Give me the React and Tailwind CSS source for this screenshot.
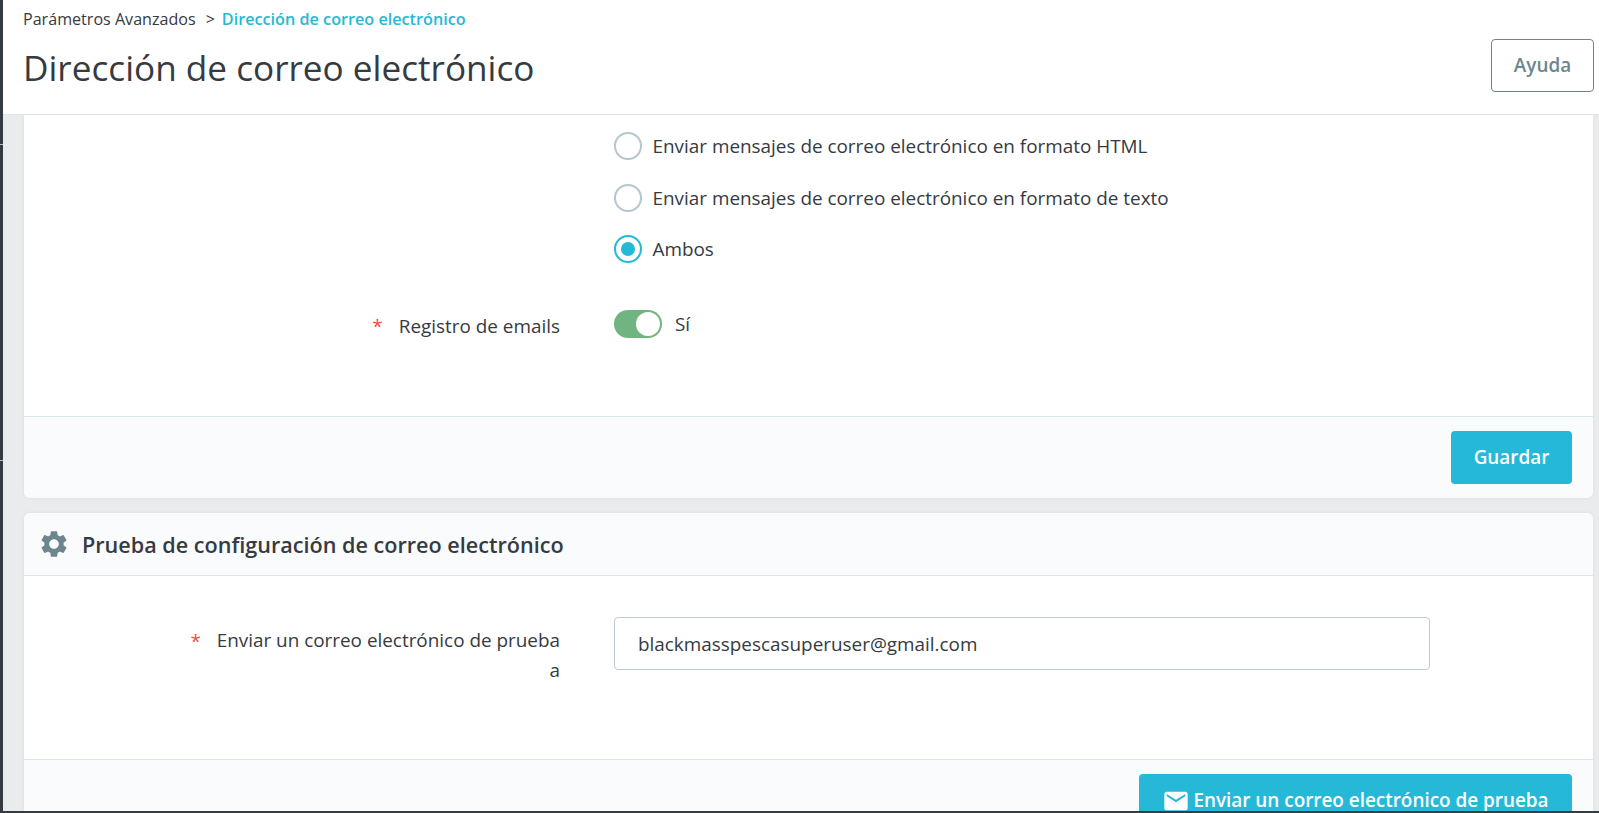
import React from "react";

const font = { fontFamily: '"Open Sans", sans-serif' };

function Radio({ checked, label }) {
  return (
    <div className="flex items-center h-[28px]">
      <span className={`w-[28px] h-[28px] rounded-full border-2 bg-white flex items-center justify-center ${checked ? "border-[#25b9d7]" : "border-[#b3c7cd]"}`}>
        {checked && <span className="w-[14px] h-[14px] rounded-full bg-[#25b9d7]" />}
      </span>
      <span className="ml-[10.5px] text-[18.9px] leading-[28px] text-[#363a41]">{label}</span>
    </div>
  );
}

export default function App() {
  return (
    <div style={font} className="relative w-[1599px] h-[813px] overflow-hidden flex flex-col bg-[#eaebec]">
      <div className="flex flex-1 min-h-0">
        <div className="relative w-[3px] bg-[#363a41] shrink-0">
          <div className="absolute left-0 top-[144px] w-[3px] h-px bg-[#bbbcbe]" />
          <div className="absolute left-0 top-[460px] w-[3px] h-px bg-[#bbbcbe]" />
        </div>
        <div className="flex-1 min-w-0 flex flex-col">
          <header className="h-[115px] shrink-0 bg-white border-b border-[#dfe1e3] flex flex-col relative">
            <div className="pl-[20px] pt-[8px] text-[16.1px] leading-[22px] text-[#363a41] flex">
              <span>Parámetros Avanzados</span>
              <span className="ml-[10px]">&gt;</span>
              <span className="ml-[7px] text-[#25b9d7] font-semibold text-[16.2px]">Dirección de correo electrónico</span>
            </div>
            <div className="flex items-start justify-between pl-[20px] pr-[5px] pt-[13px]">
              <h1 className="text-[35.15px] leading-[48px] text-[#363a41] font-normal">Dirección de correo electrónico</h1>
              <button className="w-[103px] h-[53px] -mt-[4px] border border-[#6c868e] rounded-[4px] bg-white text-[#6c868e] text-[18.9px] font-semibold">Ayuda</button>
            </div>
          </header>

          <main className="flex-1 min-h-0 pl-[21px] pr-[6px] flex flex-col gap-[15px]">
            <section className="h-[383px] shrink-0 bg-white rounded-b-[6px] shadow-[0_0_4px_rgba(0,0,0,0.06)] flex flex-col">
              <div className="flex-1 flex">
                <div className="w-[536px] shrink-0 flex flex-col pt-[198px]">
                  <div className="flex justify-end text-[18.9px] leading-[26px] text-[#363a41]">
                    <span className="text-[#f54c3e] mr-[16px]">*</span>
                    <span>Registro de emails</span>
                  </div>
                </div>
                <div className="ml-[54px] pt-[17px] flex flex-col">
                  <div className="flex flex-col gap-[23.5px]">
                    <Radio label="Enviar mensajes de correo electrónico en formato HTML" />
                    <Radio label="Enviar mensajes de correo electrónico en formato de texto" />
                    <Radio checked label="Ambos" />
                  </div>
                  <div className="flex items-center mt-[47px]">
                    <span className="relative w-[48px] h-[28px] rounded-full bg-[#70b580]">
                      <span className="absolute right-[2px] top-[2px] w-[24px] h-[24px] rounded-full bg-white" />
                    </span>
                    <span className="ml-[13px] text-[18.9px] leading-[24px] text-[#363a41]">Sí</span>
                  </div>
                </div>
              </div>
              <div className="h-[82px] shrink-0 bg-[#fafbfc] border-t border-[#dbe6e9] rounded-b-[6px] flex justify-end items-start pt-[14px] pr-[21px]">
                <button className="w-[121px] h-[53px] rounded-[4px] bg-[#25b9d7] text-white text-[18.9px] font-semibold">Guardar</button>
              </div>
            </section>

            <section className="flex-1 min-h-0 bg-white rounded-t-[6px] shadow-[0_0_4px_rgba(0,0,0,0.06)] flex flex-col overflow-hidden">
              <div className="h-[63px] shrink-0 bg-[#fafbfc] border-b border-[#dbe6e9] flex items-center pl-[14px]">
                <svg width="32" height="32" viewBox="0 0 24 24" fill="#6c868e">
                  <path d="M19.14 12.94c.04-.3.06-.61.06-.94 0-.32-.02-.64-.07-.94l2.03-1.58a.49.49 0 0 0 .12-.61l-1.92-3.32a.488.488 0 0 0-.59-.22l-2.39.96c-.5-.38-1.03-.7-1.62-.94l-.36-2.54a.484.484 0 0 0-.48-.41h-3.84c-.24 0-.43.17-.47.41l-.36 2.54c-.59.24-1.13.57-1.62.94l-2.39-.96c-.22-.08-.47 0-.59.22L2.74 8.87c-.12.21-.08.47.12.61l2.03 1.58c-.05.3-.09.63-.09.94s.02.64.07.94l-2.03 1.58a.49.49 0 0 0-.12.61l1.92 3.32c.12.22.37.29.59.22l2.39-.96c.5.38 1.03.7 1.62.94l.36 2.54c.05.24.24.41.48.41h3.84c.24 0 .44-.17.47-.41l.36-2.54c.59-.24 1.13-.56 1.62-.94l2.39.96c.22.08.47 0 .59-.22l1.92-3.32c.12-.22.07-.47-.12-.61l-2.01-1.58zM12 15.6c-1.98 0-3.6-1.62-3.6-3.6s1.62-3.6 3.6-3.6 3.6 1.62 3.6 3.6-1.62 3.6-3.6 3.6z" />
                </svg>
                <h2 className="ml-[12px] pt-[1px] text-[21.6px] leading-[30px] font-semibold text-[#363a41]">Prueba de configuración de correo electrónico</h2>
              </div>
              <div className="h-[183px] shrink-0 flex pt-[41px]">
                <div className="w-[536px] shrink-0 flex justify-end pt-[9px]">
                  <span className="text-[#f54c3e] text-[18.9px] leading-[30px] mr-[13px]">*</span>
                  <span className="w-[346px] text-[18.9px] leading-[29.5px] text-right text-[#363a41]">Enviar un correo electrónico de prueba a</span>
                </div>
                <div className="ml-[54px]">
                  <input readOnly value="blackmasspescasuperuser@gmail.com" className="w-[816px] h-[53px] px-[23px] border border-[#bbcdd2] rounded-[4px] bg-white text-[18.9px] text-[#363a41] outline-none" />
                </div>
              </div>
              <div className="flex-1 bg-[#fafbfc] border-t border-[#dbe6e9] flex justify-end items-start pt-[14px] pr-[21px]">
                <button className="w-[433px] h-[53px] shrink-0 rounded-[4px] bg-[#25b9d7] text-white text-[18.9px] font-semibold flex items-center justify-center">
                  <svg width="28" height="28" viewBox="0 0 24 24" fill="#fff" className="mr-[3px]">
                    <path d="M20 4H4c-1.1 0-1.99.9-1.99 2L2 18c0 1.1.9 2 2 2h16c1.1 0 2-.9 2-2V6c0-1.1-.9-2-2-2zm0 4-8 5-8-5V6l8 5 8-5v2z" />
                  </svg>
                  Enviar un correo electrónico de prueba
                </button>
              </div>
            </section>
          </main>
        </div>
      </div>
      <div className="h-[2px] shrink-0 bg-[#363a41]" />
    </div>
  );
}
